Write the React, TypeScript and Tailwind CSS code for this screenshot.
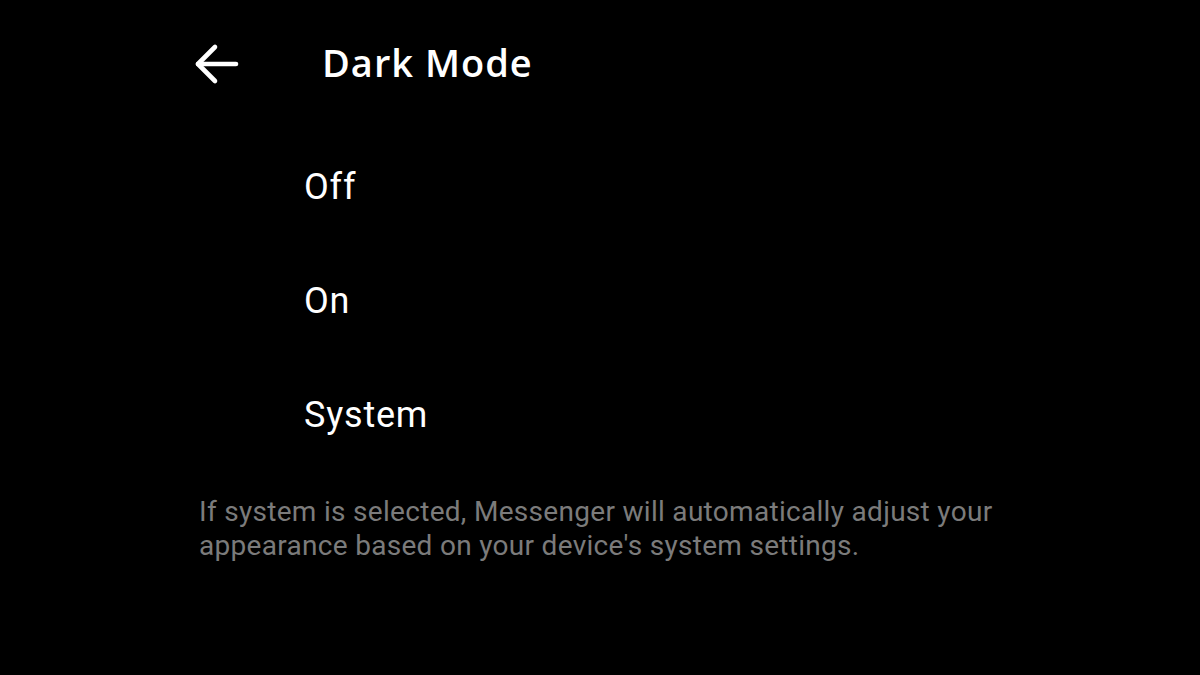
const options = ["Off", "On", "System"];

function BackArrow() {
  return (
    <svg width="46" height="42" viewBox="0 0 46 42" fill="none" stroke="currentColor" strokeWidth="4.6" strokeLinecap="round" strokeLinejoin="round">
      <path d="M42 21H4" />
      <path d="M21 4L4 21l17 17" />
    </svg>
  );
}

export default function App() {
  return (
    <div className="w-[1200px] h-[675px] bg-black text-white overflow-hidden">
      <header className="flex items-center h-[128px] pl-[194px]">
        <button className="flex items-center justify-center -mt-[1px]">
          <BackArrow />
        </button>
        <h1 className="ml-[82px] -mt-[4px] text-[38px] font-semibold tracking-[1px] font-['Open_Sans',sans-serif]">
          Dark Mode
        </h1>
      </header>

      <ul className="mt-[2px] pl-[304px] font-['Roboto',sans-serif] text-[36px] tracking-[0.8px]">
        {options.map((opt) => (
          <li key={opt} className="h-[114px] flex items-center">
            {opt}
          </li>
        ))}
      </ul>

      <p className="pl-[199px] mt-[23px] text-[28px] tracking-[0.3px] leading-[34px] text-[#7b7b7b] font-['Roboto',sans-serif] whitespace-nowrap">
        If system is selected, Messenger will automatically adjust your
        <br />
        appearance based on your device's system settings.
      </p>
    </div>
  );
}
